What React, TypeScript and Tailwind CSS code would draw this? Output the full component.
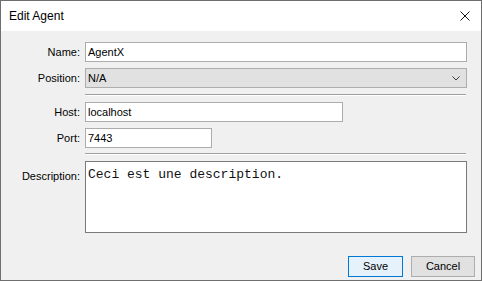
const ui = { fontFamily: '"Liberation Sans", Arial, sans-serif' };
const mono = { fontFamily: '"Liberation Mono", "Courier New", monospace' };

function Label({ text, top }: { text: string; top?: boolean }) {
  return (
    <div
      className={`w-[84px] shrink-0 pr-[5px] text-right text-[11px] text-black ${top ? 'self-start pt-[7px]' : ''}`}
    >
      {text}
    </div>
  );
}

function Field({ value, width }: { value: string; width: string }) {
  return (
    <div
      className={`flex h-[20px] ${width} items-center border border-[#acacac] bg-white pl-[2px] text-[11px] text-black`}
    >
      {value}
    </div>
  );
}

function Separator() {
  return (
    <div className="ml-[84px] mr-[15px] border-t border-b border-t-[#a0a0a0] border-b-white" />
  );
}

export default function App() {
  return (
    <div
      className="flex h-[281px] w-[482px] flex-col border border-[#6f6f6f] bg-[#f0f0f0]"
      style={ui}
    >
      <div className="flex h-[30px] shrink-0 items-center justify-between bg-white pl-[8px] pr-[11px]">
        <span className="text-[12px] text-black">Edit Agent</span>
        <svg width="10" height="10" viewBox="0 0 10 10" aria-hidden="true">
          <path d="M0.5 0.5L9.5 9.5M9.5 0.5L0.5 9.5" stroke="#111" strokeWidth="1" />
        </svg>
      </div>

      <div className="flex flex-1 flex-col pt-[11px]">
        <div className="flex items-center">
          <Label text="Name:" />
          <Field value="AgentX" width="w-[382px]" />
        </div>
        <div className="mt-[6px] flex items-center">
          <Label text="Position:" />
          <div className="flex h-[20px] w-[382px] items-center justify-between border border-[#adadad] bg-[#e1e1e1] pl-[2px] pr-[6px] text-[11px] text-black">
            <span>N/A</span>
            <svg width="8" height="5" viewBox="0 0 8 5" aria-hidden="true">
              <path d="M0.5 0.5L4 4L7.5 0.5" fill="none" stroke="#3c3c3c" strokeWidth="1" />
            </svg>
          </div>
        </div>

        <div className="mt-[6px]">
          <Separator />
        </div>

        <div className="mt-[6px] flex items-center">
          <Label text="Host:" />
          <Field value="localhost" width="w-[258px]" />
        </div>
        <div className="mt-[6px] flex items-center">
          <Label text="Port:" />
          <Field value="7443" width="w-[127px]" />
        </div>

        <div className="mt-[5px]">
          <Separator />
        </div>

        <div className="mt-[6px] flex">
          <Label text="Description:" top />
          <div
            className="h-[72px] w-[382px] border border-[#7a7a7a] bg-white pl-[2px] pt-[5px] text-[13px] leading-[16px] text-[#111]"
            style={mono}
          >
            Ceci est une description.
          </div>
        </div>

        <div className="mt-auto flex justify-end gap-[8px] pb-[3px] pr-[6px]">
          <button className="h-[21px] w-[55px] border border-[#0078d7] bg-[#e5f1fb] text-[11px] text-black">
            Save
          </button>
          <button className="h-[21px] w-[64px] border border-[#adadad] bg-[#e1e1e1] text-[11px] text-black">
            Cancel
          </button>
        </div>
      </div>
    </div>
  );
}
